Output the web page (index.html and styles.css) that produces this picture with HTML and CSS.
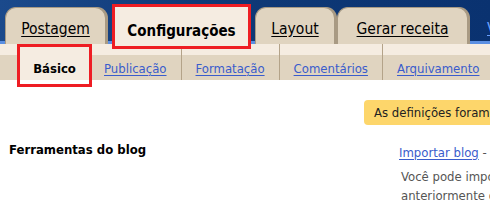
FILE: index.html
```html
<!DOCTYPE html>
<html lang="pt-BR">
<head>
<meta charset="utf-8">
<title>Configurações</title>
<link rel="stylesheet" href="styles.css">
</head>
<body>
<header class="topbar">
  <nav class="tabs">
    <a class="tab tab-postagem" href="#">Postagem</a>
    <a class="tab tab-config active" href="#">Configurações</a>
    <a class="tab tab-layout" href="#">Layout</a>
    <a class="tab tab-receita" href="#">Gerar receita</a>
    <a class="view-link" href="#">Ver blog</a>
  </nav>
</header>
<div class="subbar">
  <nav class="subtabs">
    <span class="subtab active">Básico</span>
    <a class="subtab" href="#">Publicação</a>
    <a class="subtab" href="#">Formatação</a>
    <a class="subtab" href="#">Comentários</a>
    <a class="subtab" href="#">Arquivamento</a>
    <a class="subtab" href="#">Site Feed</a>
  </nav>
</div>
<main class="content">
  <div class="notice-row">
    <div class="notice">As definições foram salvas.</div>
  </div>
  <section class="tools">
    <h2 class="tools-title">Ferramentas do blog</h2>
    <div class="tools-body">
      <div class="tools-links"><a href="#">Importar blog</a> - <a href="#">Exportar blog</a> - <a href="#">Excluir blog</a></div>
      <p class="tools-desc">Você pode importar postagens e comentários de um arquivo exportado<br>anteriormente do Blogger.</p>
    </div>
  </section>
</main>
</body>
</html>
```
FILE: styles.css
```css
html, body {
  margin: 0;
  padding: 0;
  overflow: hidden;
  background: #ffffff;
}
body {
  width: 490px;
  font-family: "DejaVu Sans Condensed", "DejaVu Sans", sans-serif;
  font-size: 13px;
  color: #000;
}
.topbar {
  height: 44px;
  background:
    linear-gradient(to bottom, transparent 41px, #5b8fe2 41px),
    linear-gradient(to right, #1b4a8c 0%, #0f3a78 40%, #0a3270 100%);
}
.tabs {
  display: flex;
  align-items: flex-end;
  height: 44px;
  padding-left: 5px;
  white-space: nowrap;
}
.tab {
  flex-shrink: 0;
  box-sizing: border-box;
  height: 37px;
  padding-top: 12px;
  text-align: center;
  font-size: 15.5px;
  color: #000;
  text-decoration: underline;
  text-underline-offset: 2px;
  background: #e0d4c0;
  border: 1px solid #a89a84;
  border-bottom: none;
  border-radius: 11px 11px 0 0;
  box-shadow: 2px 0 0 #a99a83;
}
.tab-postagem { width: 101px; margin-right: 9px; }
.tab-config { width: 133px; margin-right: 7px; }
.tab-layout { width: 80px; margin-right: 2px; }
.tab-receita { width: 131px; margin-right: 19px; }
.tab.active {
  position: relative;
  z-index: 2;
  height: 42px;
  margin-bottom: -5px;
  padding-top: 15px;
  background: #f5ece1;
  border: none;
  border-radius: 0;
  box-shadow: none;
  font-weight: bold;
  font-size: 15px;
  text-decoration: none;
}
.tab.active::after,
.subtab.active::after {
  content: "";
  position: absolute;
  border: 3px solid #ee1d23;
  pointer-events: none;
}
.tab.active::after {
  left: -3px;
  right: -3px;
  top: -3px;
  bottom: 0;
}
.view-link {
  flex-shrink: 0;
  align-self: center;
  margin-top: 14px;
  font-size: 15.5px;
  color: #6aa0ff;
}
.subbar {
  height: 36px;
  background: linear-gradient(to bottom, #f5ece1 11px, #e0d4c0 11px);
}
.subtabs {
  display: flex;
  height: 36px;
  padding-left: 20px;
  white-space: nowrap;
}
.subtab {
  flex-shrink: 0;
  box-sizing: border-box;
  height: 36px;
  padding: 17px 14px 0;
  color: #3a5ccc;
  text-decoration: underline;
  text-underline-offset: 2px;
  border-right: 1px solid #b4a389;
}
.subtabs .subtab:nth-child(2) { padding-left: 15px; }
.subtab.active {
  position: relative;
  width: 69px;
  padding: 17px 0 0;
  text-align: center;
  background: #f5ece1;
  color: #000;
  font-weight: bold;
  text-decoration: none;
  border-right: none;
}
.subtab.active::after {
  left: -3px;
  right: -3px;
  top: 0;
  bottom: -7px;
}
.content {
  padding-top: 20px;
}
.notice-row {
  display: flex;
  padding-left: 364px;
}
.notice {
  flex-shrink: 0;
  height: 25px;
  box-sizing: border-box;
  padding: 5px 10px 0;
  background: #fdd66b;
  border-radius: 4px;
  color: #222;
  white-space: nowrap;
}
.tools {
  display: grid;
  grid-template-columns: 390px 480px;
  padding-left: 9px;
  margin-top: 15px;
  line-height: 19px;
}
.tools-title {
  margin: 0;
  font-size: 13px;
  font-weight: bold;
  line-height: 19px;
}
.tools-body {
  padding-top: 3px;
  color: #555;
}
.tools-links { white-space: nowrap; }
.tools-links a {
  color: #3a5ccc;
  text-underline-offset: 2px;
}
.tools-desc {
  margin: 5px 0 0 2px;
  white-space: nowrap;
  color: #555;
}
```
